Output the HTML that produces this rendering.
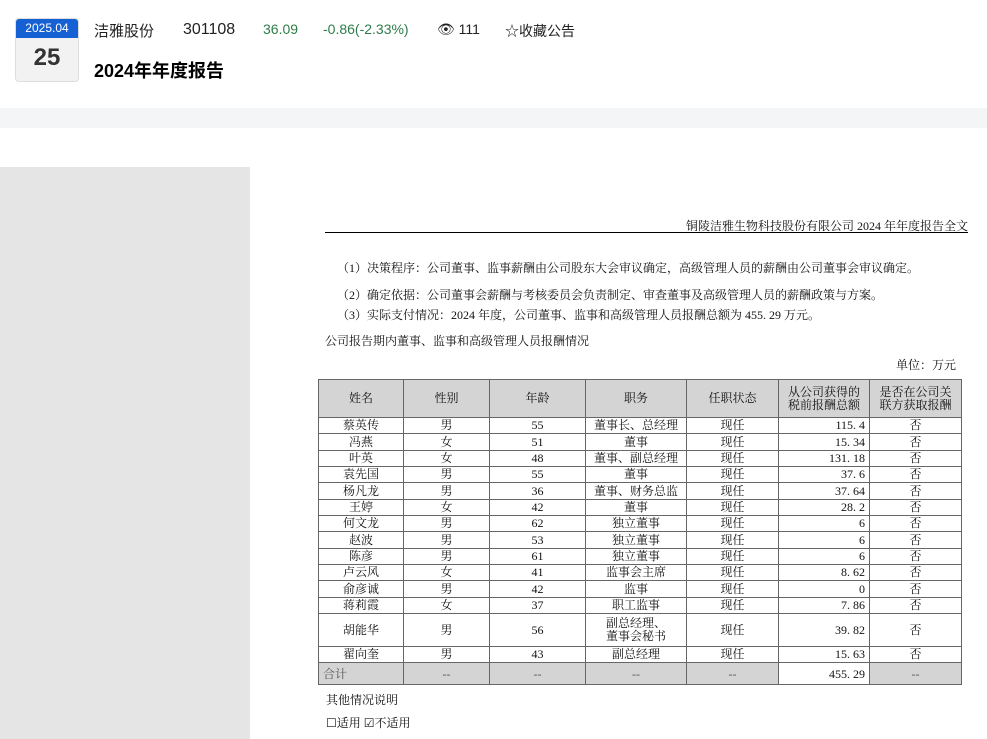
<!DOCTYPE html>
<html><head><meta charset="utf-8"><style>
*{margin:0;padding:0;box-sizing:border-box}
body{width:987px;height:739px;overflow:hidden;background:#fff;position:relative;font-family:"Liberation Sans","Noto Sans CJK SC",sans-serif}
.a{position:absolute;white-space:nowrap}
.s{font-family:"Liberation Serif","Noto Serif CJK SC",serif;font-size:12px;color:#111}
table{position:absolute;left:318px;top:379px;border-collapse:collapse;font-family:"Liberation Serif","Noto Serif CJK SC",serif;font-size:12px;color:#111}
td{border:1px solid #666;text-align:center;height:16.33px;line-height:12.5px;padding:0 4px}
tr.h td{background:#d4d4d4;height:38px}
tr.t td{background:#d4d4d4;height:22px;color:#555}
td.r{text-align:right}
</style></head><body>
<div class="a" style="left:15px;top:18px;width:64px;height:64px;border:1px solid #ddd;border-radius:4px;background:#f2f2f2;overflow:hidden">
<div style="background:#1560d2;color:#fff;font-size:12px;text-align:center;height:19px;line-height:19px">2025.04</div>
<div style="text-align:center;font-size:24px;font-weight:bold;color:#333;line-height:40px">25</div></div>
<div class="a" style="left:94px;top:20px;font-size:15px;color:#222">洁雅股份</div>
<div class="a" style="left:183px;top:21px;font-size:16px;color:#222">301108</div>
<div class="a" style="left:263px;top:21px;font-size:14px;color:#2e7d4a">36.09</div>
<div class="a" style="left:323px;top:21px;font-size:14px;color:#2e7d4a">-0.86(-2.33%)</div>
<div class="a" style="left:437px;top:21px;font-size:14px;color:#222">👁︎ 111</div>
<div class="a" style="left:505px;top:21px;font-size:14px;color:#222">☆收藏公告</div>
<div class="a" style="left:94px;top:57px;font-size:18px;font-weight:bold;color:#000">2024年年度报告</div>
<div class="a" style="left:0;top:108px;width:987px;height:20px;background:#f4f5f6"></div>
<div class="a" style="left:0;top:167px;width:250px;height:572px;background:#e5e5e5"></div>
<div class="a s" style="right:19px;top:217px">铜陵洁雅生物科技股份有限公司 2024 年年度报告全文</div>
<div class="a" style="left:325px;top:232px;width:643px;height:1px;background:#000"></div>
<div class="a s" style="left:337px;top:259px">（1）决策程序：公司董事、监事薪酬由公司股东大会审议确定，高级管理人员的薪酬由公司董事会审议确定。</div>
<div class="a s" style="left:337px;top:286px">（2）确定依据：公司董事会薪酬与考核委员会负责制定、审查董事及高级管理人员的薪酬政策与方案。</div>
<div class="a s" style="left:337px;top:306px">（3）实际支付情况：2024 年度，公司董事、监事和高级管理人员报酬总额为 455. 29 万元。</div>
<div class="a s" style="left:325px;top:332px">公司报告期内董事、监事和高级管理人员报酬情况</div>
<div class="a s" style="left:896px;top:356px">单位：万元</div>
<table>
<colgroup><col style="width:85px"><col style="width:86px"><col style="width:96px"><col style="width:101px"><col style="width:92px"><col style="width:91px"><col style="width:92px"></colgroup>
<tr class="h"><td>姓名</td><td>性别</td><td>年龄</td><td>职务</td><td>任职状态</td><td style="padding:0 2px">从公司获得的<br>税前报酬总额</td><td style="padding:0 2px">是否在公司关<br>联方获取报酬</td></tr>
<tr><td>蔡英传</td><td>男</td><td>55</td><td>董事长、总经理</td><td>现任</td><td class="r">115. 4</td><td>否</td></tr>
<tr><td>冯燕</td><td>女</td><td>51</td><td>董事</td><td>现任</td><td class="r">15. 34</td><td>否</td></tr>
<tr><td>叶英</td><td>女</td><td>48</td><td>董事、副总经理</td><td>现任</td><td class="r">131. 18</td><td>否</td></tr>
<tr><td>袁先国</td><td>男</td><td>55</td><td>董事</td><td>现任</td><td class="r">37. 6</td><td>否</td></tr>
<tr><td>杨凡龙</td><td>男</td><td>36</td><td>董事、财务总监</td><td>现任</td><td class="r">37. 64</td><td>否</td></tr>
<tr><td>王婷</td><td>女</td><td>42</td><td>董事</td><td>现任</td><td class="r">28. 2</td><td>否</td></tr>
<tr><td>何文龙</td><td>男</td><td>62</td><td>独立董事</td><td>现任</td><td class="r">6</td><td>否</td></tr>
<tr><td>赵波</td><td>男</td><td>53</td><td>独立董事</td><td>现任</td><td class="r">6</td><td>否</td></tr>
<tr><td>陈彦</td><td>男</td><td>61</td><td>独立董事</td><td>现任</td><td class="r">6</td><td>否</td></tr>
<tr><td>卢云风</td><td>女</td><td>41</td><td>监事会主席</td><td>现任</td><td class="r">8. 62</td><td>否</td></tr>
<tr><td>俞彦诚</td><td>男</td><td>42</td><td>监事</td><td>现任</td><td class="r">0</td><td>否</td></tr>
<tr><td>蒋莉霞</td><td>女</td><td>37</td><td>职工监事</td><td>现任</td><td class="r">7. 86</td><td>否</td></tr>
<tr><td style="height:33px">胡能华</td><td>男</td><td>56</td><td>副总经理、<br>董事会秘书</td><td>现任</td><td class="r">39. 82</td><td>否</td></tr>
<tr><td>翟向奎</td><td>男</td><td>43</td><td>副总经理</td><td>现任</td><td class="r">15. 63</td><td>否</td></tr>
<tr class="t"><td style="text-align:left">合计</td><td>--</td><td>--</td><td>--</td><td>--</td><td class="r" style="background:#fff;color:#111">455. 29</td><td>--</td></tr>
</table>
<div class="a s" style="left:326px;top:691px">其他情况说明</div>
<div class="a s" style="left:326px;top:714px">☐适用 ☑不适用</div>
</body></html>
